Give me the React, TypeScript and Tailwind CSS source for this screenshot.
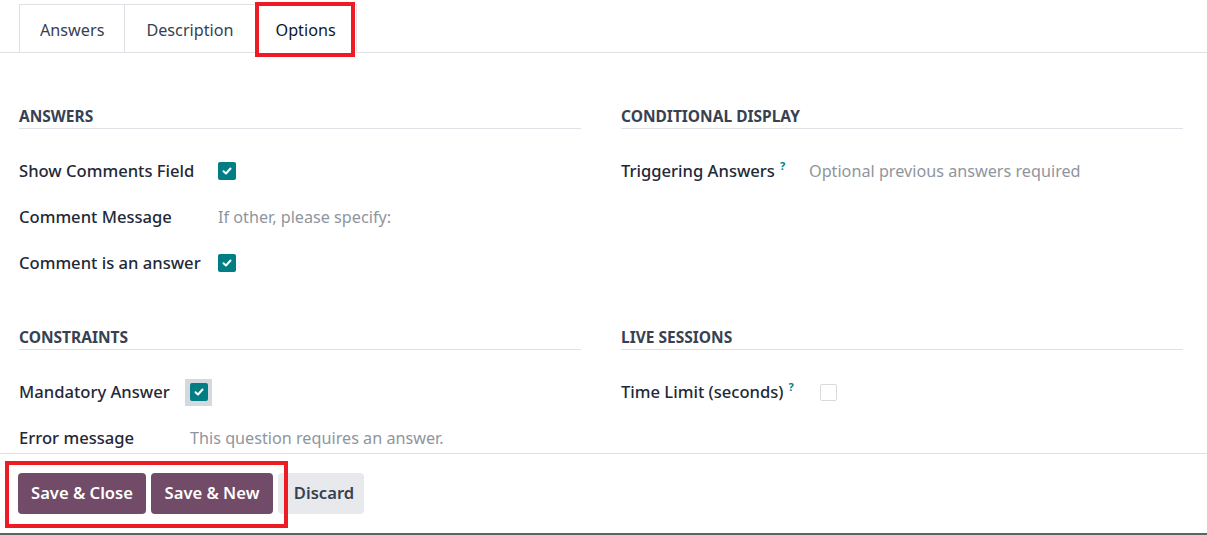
import React from "react";

const font = { fontFamily: '"Noto Sans", "Open Sans", sans-serif' };

function Check({ checked = true, focus = false }: { checked?: boolean; focus?: boolean }) {
  const box = checked ? (
    <span className="flex h-[18px] w-[18px] items-center justify-center rounded-[2px] bg-[#017e84]">
      <svg width="10" height="8" viewBox="0 0 10 8">
        <path d="M1.5 4.2 L4 6.5 L8.5 1.5" fill="none" stroke="white" strokeWidth="2" strokeLinecap="round" strokeLinejoin="round" />
      </svg>
    </span>
  ) : (
    <span className="block h-[17px] w-[17px] rounded-[2px] border border-[#d8dadd] bg-white" />
  );
  if (focus)
    return <span className="flex h-[27px] w-[27px] items-center justify-center bg-[#d5d8dc]">{box}</span>;
  return box;
}

function Row({ label, sup, children, valueX }: { label: string; sup?: boolean; children: React.ReactNode; valueX: string }) {
  return (
    <div className="flex h-[46px] items-center">
      <div className={`flex items-center ${valueX} shrink-0 text-[16.6px] font-medium text-[#1f2937]`}>
        <span>{label}</span>
        {sup && <span className="relative -top-[5px] ml-[5px] text-[11px] font-bold leading-none text-[#017e84]">?</span>}
      </div>
      {children}
    </div>
  );
}

function Header({ children }: { children: React.ReactNode }) {
  return (
    <div className="h-[23px] border-b border-[#dee2e6] text-[15.5px] font-bold leading-[20px] text-[#374151]">{children}</div>
  );
}

export default function App() {
  return (
    <div style={font} className="relative h-[535px] w-[1207px] overflow-hidden bg-white">
      {/* content area */}
      <div className="h-[453px] overflow-hidden">
        {/* tabs */}
        <div className="flex h-[53px] items-end border-b border-[#dee2e6] pl-[19px]">
          <div className="flex h-[48px] items-center border-l border-t border-[#dee2e6] px-[20px] pt-[3px] text-[16.2px] text-[#374151]">Answers</div>
          <div className="flex h-[48px] items-center border-l border-t border-[#dee2e6] px-[21px] pt-[3px] text-[16.2px] text-[#374151]">Description</div>
          <div className="relative -mb-px flex h-[49px] items-center border-x border-t border-[#dee2e6] bg-white px-[20px] pt-[3px] text-[16.2px] text-[#111827]">
            Options
            <span className="pointer-events-none absolute -left-[1px] -top-[3px] h-[55px] w-[100px] border-[4px] border-[#ed1c24]" />
          </div>
        </div>

        <div className="grid grid-cols-2 gap-x-[40px] pl-[19px] pr-[24px] pt-[53px]">
          <div>
            <Header>ANSWERS</Header>
            <div className="mt-[19px]">
              <Row label="Show Comments Field" valueX="w-[199px]"><Check /></Row>
              <Row label="Comment Message" valueX="w-[199px]">
                <span className="text-[16.2px] text-[#8f959e]">If other, please specify:</span>
              </Row>
              <Row label="Comment is an answer" valueX="w-[199px]"><Check /></Row>
            </div>
          </div>
          <div>
            <Header>CONDITIONAL DISPLAY</Header>
            <div className="mt-[19px]">
              <Row label="Triggering Answers" sup valueX="w-[188px]">
                <span className="text-[16.2px] text-[#8f959e]">Optional previous answers required</span>
              </Row>
            </div>
          </div>

          <div className="mt-[41px]">
            <Header>CONSTRAINTS</Header>
            <div className="mt-[19px]">
              <Row label="Mandatory Answer" valueX="w-[166px]"><Check focus /></Row>
              <Row label="Error message" valueX="w-[171px]">
                <span className="text-[16.2px] text-[#8f959e]">This question requires an answer.</span>
              </Row>
            </div>
          </div>
          <div className="mt-[41px]">
            <Header>LIVE SESSIONS</Header>
            <div className="mt-[19px]">
              <Row label="Time Limit (seconds)" sup valueX="w-[199px]"><Check checked={false} /></Row>
            </div>
          </div>
        </div>
      </div>

      {/* footer */}
      <div className="relative h-[82px] border-t border-[#dee2e6]">
        <div className="flex gap-[5px] pl-[18px] pt-[19px]">
          <button className="h-[41px] w-[128px] rounded-[4px] bg-[#714b67] text-[16.6px] font-semibold text-white">Save &amp; Close</button>
          <button className="h-[41px] w-[122px] rounded-[4px] bg-[#714b67] text-[16.6px] font-semibold text-white">Save &amp; New</button>
          <button className="h-[41px] w-[86px] rounded-[4px] bg-[#e7e9ed] pl-[6px] text-[16.6px] font-semibold text-[#374151]">Discard</button>
        </div>
        <span className="pointer-events-none absolute left-[5px] top-[7px] h-[67px] w-[283px] border-[4px] border-[#ed1c24]" />
        <div className="absolute bottom-0 left-0 h-[2px] w-full bg-[#5f6368]" />
      </div>
    </div>
  );
}
